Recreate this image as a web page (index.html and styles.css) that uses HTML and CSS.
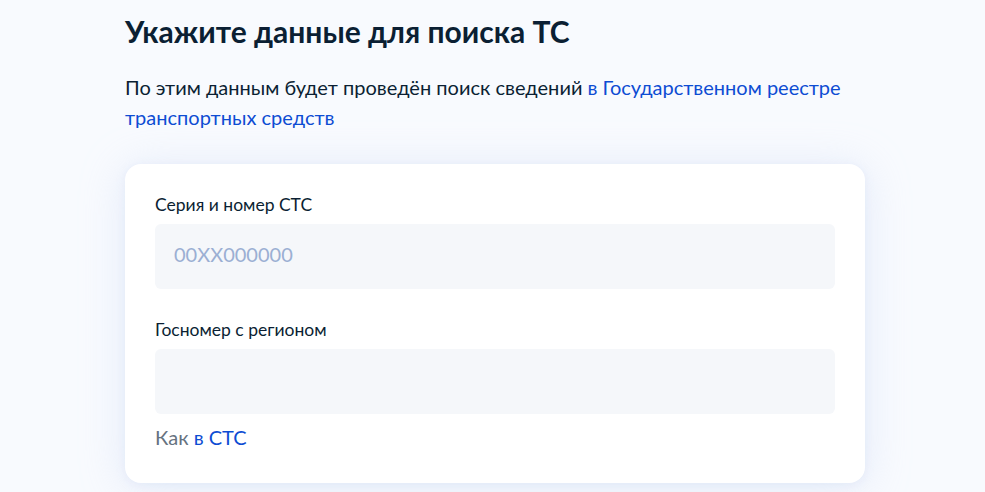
FILE: index.html
```html
<!DOCTYPE html>
<html lang="ru">
<head>
<meta charset="utf-8">
<link rel="stylesheet" href="styles.css">
</head>
<body>
<main class="page">
  <h1 class="title">Укажите данные для поиска ТС</h1>
  <p class="lead">По этим данным будет проведён поиск сведений <a class="link" href="#">в Государственном реестре транспортных средств</a></p>
  <section class="card">
    <div class="field">
      <label class="label">Серия и номер СТС</label>
      <div class="input"><span class="placeholder">00XX000000</span></div>
    </div>
    <div class="field field-second">
      <label class="label">Госномер с регионом</label>
      <div class="input"></div>
      <div class="hint">Как <a class="link" href="#">в СТС</a></div>
    </div>
  </section>
</main>
</body>
</html>
```
FILE: styles.css
```css
html, body {
  margin: 0;
  padding: 0;
}
body {
  background: #f8fafe;
  font-family: Lato, "Noto Sans", sans-serif;
  color: #0b1f33;
  height: 492px;
  overflow: hidden;
}
.page {
  width: 740px;
  margin-left: 125px;
  padding-top: 13px;
}
.title {
  margin: 0;
  font-size: 30px;
  line-height: 36px;
  font-weight: 700;
}
.lead {
  margin: 23px 0 0;
  font-size: 20px;
  line-height: 30px;
}
.link {
  color: #0d4cd3;
  text-decoration: none;
}
.card {
  margin-top: 32px;
  background: #fff;
  border-radius: 16px;
  padding: 29px 30px 34px;
  box-shadow: 0 2px 8px rgba(196, 210, 240, 0.25), 0 4px 44px rgba(200, 214, 242, 0.4);
}
.field {
  display: flex;
  flex-direction: column;
}
.field-second {
  margin-top: 29px;
}
.label {
  font-size: 17.5px;
  line-height: 24px;
  margin-bottom: 7px;
}
.input {
  box-sizing: border-box;
  height: 65px;
  background: #f5f7fa;
  border-radius: 6px;
  padding: 18px 19px 0;
}
.placeholder {
  display: block;
  font-size: 20px;
  line-height: 24px;
  color: #9bafd3;
}
.hint {
  margin-top: 11px;
  font-size: 20px;
  line-height: 24px;
  color: #66727f;
}
```
